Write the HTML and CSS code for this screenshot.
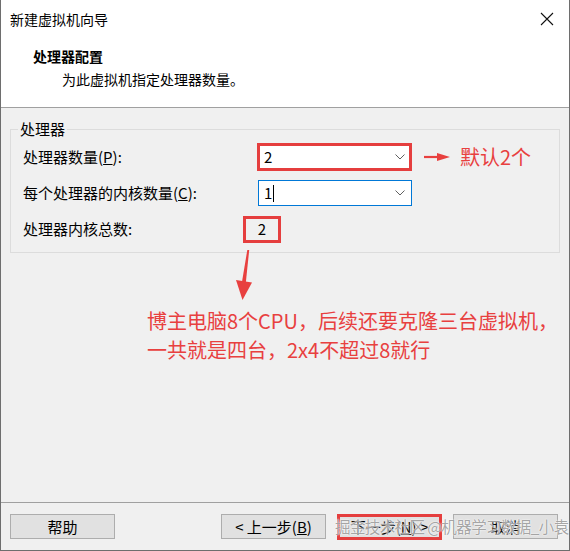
FILE: index.html
```html
<!DOCTYPE html>
<html lang="zh-CN">
<head>
<meta charset="utf-8">
<title>新建虚拟机向导</title>
<link rel="stylesheet" href="styles.css">
</head>
<body>
<div class="window">
  <div class="titlebar">
    <span class="title">新建虚拟机向导</span>
    <svg class="close" width="14" height="14" viewBox="0 0 14 14"><path d="M1 1L13 13M13 1L1 13" stroke="#111" stroke-width="1.1" fill="none"/></svg>
  </div>
  <div class="header">
    <div class="h-title">处理器配置</div>
    <div class="h-sub">为此虚拟机指定处理器数量。</div>
  </div>
  <div class="content">
    <fieldset class="group">
      <legend class="legend">处理器</legend>
      <div class="row">
        <span class="label">处理器数量(<u>P</u>):</span>
        <div class="combo combo-red"><span class="val">2</span><svg class="chev" width="10" height="6" viewBox="0 0 10 6"><path d="M0.5 0.5L5 5L9.5 0.5" stroke="#606060" stroke-width="1" fill="none"/></svg></div>
      </div>
      <div class="row">
        <span class="label">每个处理器的内核数量(<u>C</u>):</span>
        <div class="combo combo-focus"><span class="val">1<span class="caret"></span></span><svg class="chev" width="10" height="6" viewBox="0 0 10 6"><path d="M0.5 0.5L5 5L9.5 0.5" stroke="#606060" stroke-width="1" fill="none"/></svg></div>
      </div>
      <div class="row">
        <span class="label">处理器内核总数:</span>
        <div class="total">2</div>
      </div>
    </fieldset>
    <div class="note">
      <div>博主电脑8个CPU，后续还要克隆三台虚拟机，</div>
      <div>一共就是四台，2x4不超过8就行</div>
    </div>
  </div>
  <div class="footer">
    <button class="btn">帮助</button>
    <div class="spacer"></div>
    <button class="btn">&lt; 上一步(<u>B</u>)</button>
    <button class="btn btn-next">下一步(<u>N</u>) &gt;</button>
    <button class="btn">取消</button>
  </div>

  <div class="side-note">默认2个</div>
  <svg class="annot" width="570" height="551" viewBox="0 0 570 551">
    <path d="M423 157H438" stroke="#e8403f" stroke-width="2.2"/>
    <polygon points="436,153 449,157 436,161" fill="#e8403f"/>
    <polygon points="246.3,250 248.2,250 244.8,283 240.8,283" fill="#e8403f"/>
    <polygon points="235,280 251,282.5 241.5,300" fill="#e8403f"/>
  </svg>
  <div class="watermark">掘金技术社区 @机器学习数据_小袁</div>
</div>
</body>
</html>
```

FILE: styles.css
```css
* { box-sizing: border-box; }
html, body { margin: 0; padding: 0; background: #ffffff; }
body {
  font-family: "Noto Sans CJK SC", "Microsoft YaHei", "Noto Sans", sans-serif;
  color: #000;
}
.window {
  position: relative;
  width: 570px;
  height: 551px;
  border-left: 1px solid #6e6e6e;
  border-right: 1px solid #6e6e6e;
  border-bottom: 1px solid #6e6e6e;
  display: flex;
  flex-direction: column;
  background: #f0f0f0;
  overflow: hidden;
}
.titlebar {
  height: 37px;
  background: #fff;
  display: flex;
  align-items: center;
  justify-content: space-between;
  padding: 0 15px 0 9px;
}
.title { font-size: 14px; line-height: 20px; }
.close { display: block; }
.header {
  height: 71px;
  background: #fff;
  border-bottom: 1px solid #a0a0a0;
  padding: 9px 0 0 32px;
}
.h-title { font-size: 14px; font-weight: bold; line-height: 20px; }
.h-sub { font-size: 14px; line-height: 20px; margin-top: 3px; padding-left: 29px; }
.content { flex: 1; display: flex; flex-direction: column; }
.group {
  margin: 11px 9px 0 9px;
  padding: 0 12px 5px 12px;
  border: 1px solid #dcdcdc;
  min-width: 0;
}
.legend {
  font-size: 15px;
  line-height: 20px;
  padding: 0 2px;
  margin-left: -5px;
}
.row {
  height: 36px;
  display: grid;
  grid-template-columns: 235px 1fr;
  align-items: center;
  font-size: 15px;
}
.label { line-height: 20px; }
.combo {
  height: 26px;
  width: 154px;
  background: #fff;
  display: flex;
  align-items: center;
  justify-content: space-between;
  padding: 0 6px 0 5px;
  font-size: 15px;
}
.combo-red {
  height: 28px;
  width: 155px;
  margin-left: -1px;
  border: 3px solid #e53e3e;
  padding: 0 4px 0 4px;
}
.combo-focus { border: 1px solid #0078d7; }
.val { line-height: 20px; display: flex; align-items: center; }
.caret { display: inline-block; width: 1px; height: 17px; background: #000; margin-left: 1px; }
.chev { display: block; }
.total {
  margin-left: -15px;
  width: 38px;
  height: 27px;
  border: 3px solid #e53e3e;
  display: flex;
  align-items: center;
  justify-content: center;
  font-size: 15px;
  line-height: 20px;
}
.note {
  margin: 53px 0 0 146px;
  color: #e8403f;
  font-size: 20px;
  line-height: 29px;
}
.footer {
  height: 48px;
  border-top: 1px solid #a0a0a0;
  display: flex;
  align-items: flex-start;
  padding: 11px 11px 0 9px;
  gap: 11px;
}
.spacer { flex: 1; }
.btn {
  width: 105px;
  height: 25px;
  background: #e1e1e1;
  border: 1px solid #adadad;
  font-family: inherit;
  font-size: 15px;
  line-height: 20px;
  padding: 0;
  color: #000;
}
.btn-next { border: 3px solid #e53e3e; height: 26px; }
.side-note {
  position: absolute;
  left: 459px;
  top: 142px;
  color: #e8403f;
  font-size: 20px;
  line-height: 29px;
}
.annot { position: absolute; left: 0; top: 0; pointer-events: none; }
.watermark {
  position: absolute;
  left: 334px;
  top: 514px;
  font-size: 15.5px;
  line-height: 24px;
  color: rgba(90, 90, 90, 0.55);
  text-shadow: 0 0 2px #fff, 0 0 1px #fff;
  white-space: nowrap;
  letter-spacing: -0.6px;
}
```
